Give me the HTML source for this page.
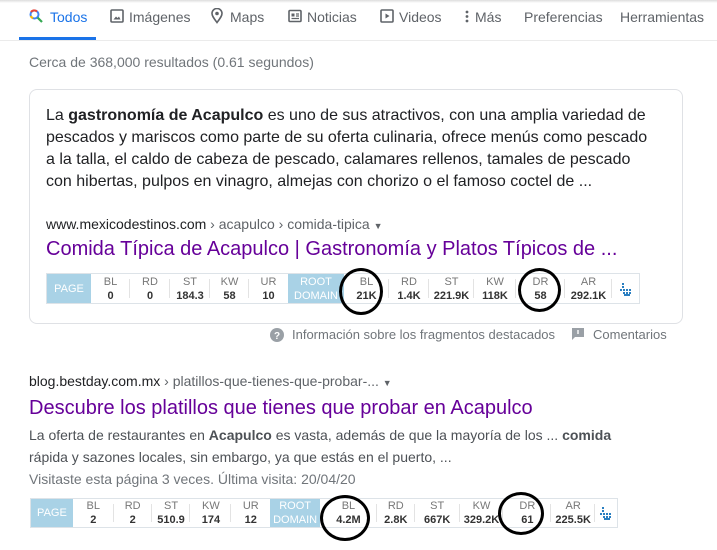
<!DOCTYPE html>
<html><head><meta charset="utf-8"><style>
*{margin:0;padding:0;box-sizing:border-box}
body{width:717px;height:550px;background:#fff;font-family:"Liberation Sans",Arial,sans-serif;position:relative;overflow:hidden}
.a{position:absolute;white-space:nowrap}
.nav{font-size:14px;color:#5f6368;top:9px}
.bar{position:absolute;height:31px;border:1px solid #dde3e8;background:#fff;display:flex;font-size:11px}
.bar div{height:100%;display:flex;flex-direction:column;align-items:center;justify-content:center;line-height:14px;position:relative}
.bar .l{color:#777}
.bar .v{color:#333;font-weight:bold}
.bar .c:after{content:"";position:absolute;right:0;top:5px;bottom:5px;border-right:1px solid #e3e3e3}
.bar .bl{background:#a9d2e6;color:#fff}
.circ{position:absolute;border:3px solid #000;border-radius:50%}
.snip{font-size:16px;color:#202124;line-height:22px}
</style></head><body>
<div style="position:absolute;top:0;left:0;width:717px;height:3px;background:linear-gradient(#ddd,#fff)"></div>
<svg class="a" style="left:29px;top:9px" width="14" height="14" viewBox="0 0 14 14"><circle cx="5.5" cy="5.5" r="4" fill="none" stroke="#4285f4" stroke-width="2"/><path d="M2 3 A4 4 0 0 1 8 2.5" stroke="#ea4335" stroke-width="2" fill="none"/><path d="M1.8 7 A4 4 0 0 0 4 9.3" stroke="#fbbc05" stroke-width="2" fill="none"/><path d="M8.5 8.5 L13 13" stroke="#34a853" stroke-width="2.2"/></svg>
<div class="a nav" style="left:50px;color:#1a73e8">Todos</div>
<div class="a" style="left:19px;top:37px;width:77px;height:3px;background:#1a73e8"></div>
<svg class="a" style="left:110px;top:9px" width="14" height="14"><rect x="1" y="1" width="12" height="12" rx="1" fill="none" stroke="#5f6368" stroke-width="1.6"/><path d="M3.5 10.5 L6 7.5 L7.5 9 L9 7.5 L10.5 10.5Z" fill="#5f6368"/></svg>
<div class="a nav" style="left:129px">Imágenes</div>
<svg class="a" style="left:211px;top:8px" width="12" height="16"><path d="M6 14.5 C3 10.5 1 8 1 5.5 A5 5 0 0 1 11 5.5 C11 8 9 10.5 6 14.5Z" fill="none" stroke="#5f6368" stroke-width="1.6"/><circle cx="6" cy="5.5" r="1.8" fill="#5f6368"/></svg>
<div class="a nav" style="left:230px">Maps</div>
<svg class="a" style="left:288px;top:9px" width="14" height="14"><rect x="1" y="1.5" width="12" height="11" rx="1" fill="none" stroke="#5f6368" stroke-width="1.6"/><rect x="3.5" y="4.5" width="3" height="3" fill="#5f6368"/><path d="M8 5h3M8 7h3M3.5 9.5h7.5" stroke="#5f6368" stroke-width="1.2"/></svg>
<div class="a nav" style="left:307px">Noticias</div>
<svg class="a" style="left:380px;top:9px" width="14" height="14"><rect x="1" y="1" width="12" height="12" rx="1" fill="none" stroke="#5f6368" stroke-width="1.6"/><path d="M5.5 4.5 L9.5 7 L5.5 9.5Z" fill="#5f6368"/></svg>
<div class="a nav" style="left:399px">Videos</div>
<svg class="a" style="left:465px;top:10px" width="4" height="13"><circle cx="2" cy="2" r="1.4" fill="#5f6368"/><circle cx="2" cy="6.5" r="1.4" fill="#5f6368"/><circle cx="2" cy="11" r="1.4" fill="#5f6368"/></svg>
<div class="a nav" style="left:475px">Más</div>
<div class="a nav" style="left:524px">Preferencias</div>
<div class="a nav" style="left:620px">Herramientas</div>
<div class="a" style="left:0;top:40px;width:717px;height:1px;background:#ebebeb"></div>
<div class="a" style="left:29px;top:54px;font-size:14px;color:#70757a">Cerca de 368,000 resultados (0.61 segundos)</div>

<div class="a" style="left:29px;top:89px;width:654px;height:235px;border:1px solid #dfe1e5;border-radius:8px"></div>
<div class="a snip" style="left:46px;top:105px">La <b>gastronomía de Acapulco</b> es uno de sus atractivos, con una amplia variedad de</div>
<div class="a snip" style="left:46px;top:127px">pescados y mariscos como parte de su oferta culinaria, ofrece menús como pescado</div>
<div class="a snip" style="left:46px;top:149px">a la talla, el caldo de cabeza de pescado, calamares rellenos, tamales de pescado</div>
<div class="a snip" style="left:46px;top:171px">con hibertas, pulpos en vinagro, almejas con chorizo o el famoso coctel de ...</div>
<div class="a" style="left:46px;top:216px;font-size:14px;color:#202124">www.mexicodestinos.com<span style="color:#5f6368"> › acapulco › comida-tipica <span style="font-size:9px">▼</span></span></div>
<div class="a" style="left:46px;top:238px;font-size:20px;color:#660099">Comida Típica de Acapulco | Gastronomía y Platos Típicos de ...</div>

<div class="bar" style="left:46px;top:273px;width:594px">
<div class="bl" style="width:44px">PAGE</div>
<div class="c" style="width:39px"><span class="l">BL</span><span class="v">0</span></div>
<div class="c" style="width:40px"><span class="l">RD</span><span class="v">0</span></div>
<div class="c" style="width:40px"><span class="l">ST</span><span class="v">184.3</span></div>
<div class="c" style="width:39px"><span class="l">KW</span><span class="v">58</span></div>
<div style="width:39px"><span class="l">UR</span><span class="v">10</span></div>
<div class="bl" style="width:56px"><span>ROOT</span><span>DOMAIN</span></div>
<div class="c" style="width:45px"><span class="l">BL</span><span class="v">21K</span></div>
<div class="c" style="width:40px"><span class="l">RD</span><span class="v">1.4K</span></div>
<div class="c" style="width:45px"><span class="l">ST</span><span class="v">221.9K</span></div>
<div class="c" style="width:42px"><span class="l">KW</span><span class="v">118K</span></div>
<div class="c" style="width:49px"><span class="l">DR</span><span class="v">58</span></div>
<div class="c" style="width:47px"><span class="l">AR</span><span class="v">292.1K</span></div>
<div style="width:27px"><svg width="12" height="14"><g fill="#2a7fc1"><rect x="2" y="1" width="2" height="2"/><rect x="2" y="4" width="2" height="2"/><rect x="0" y="7" width="2" height="2"/><rect x="3" y="7" width="2" height="2"/><rect x="6" y="7" width="2" height="2"/><rect x="9" y="7" width="2" height="2"/><rect x="3" y="10" width="2" height="2"/><rect x="6" y="10" width="2" height="2"/><rect x="9" y="10" width="2" height="2"/><rect x="4" y="12" width="6" height="2"/></g></svg></div>
</div>
<div class="circ" style="left:339px;top:268px;width:44px;height:47px"></div>
<div class="circ" style="left:518px;top:268px;width:43px;height:44px"></div>

<svg class="a" style="left:270px;top:328px" width="14" height="14"><circle cx="7" cy="7" r="7" fill="#9aa0a6"/><text x="7" y="11" font-size="10" font-weight="bold" fill="#fff" text-anchor="middle" font-family="Liberation Sans">?</text></svg>
<div class="a" style="left:292px;top:327px;font-size:13px;color:#70757a">Información sobre los fragmentos destacados</div>
<svg class="a" style="left:572px;top:328px" width="12" height="13"><path d="M0 0h12v9H3l-3 3z" fill="#9aa0a6"/><rect x="5.3" y="2" width="1.4" height="4" fill="#fff"/></svg>
<div class="a" style="left:593px;top:327px;font-size:13px;color:#70757a">Comentarios</div>

<div class="a" style="left:29px;top:373px;font-size:14px;color:#202124">blog.bestday.com.mx<span style="color:#5f6368"> › platillos-que-tienes-que-probar-... <span style="font-size:9px">▼</span></span></div>
<div class="a" style="left:29px;top:397px;font-size:20px;color:#660099">Descubre los platillos que tienes que probar en Acapulco</div>
<div class="a" style="left:29px;top:427px;font-size:14px;color:#4d5156">La oferta de restaurantes en <b>Acapulco</b> es vasta, además de que la mayoría de los ... <b>comida</b></div>
<div class="a" style="left:29px;top:449px;font-size:14px;color:#4d5156">rápida y sazones locales, sin embargo, ya que estás en el puerto, ...</div>
<div class="a" style="left:29px;top:471px;font-size:14px;color:#70757a">Visitaste esta página 3 veces. Última visita: 20/04/20</div>

<div class="bar" style="left:30px;top:498px;width:588px;height:30px">
<div class="bl" style="width:42px">PAGE</div>
<div class="c" style="width:41px"><span class="l">BL</span><span class="v">2</span></div>
<div class="c" style="width:38px"><span class="l">RD</span><span class="v">2</span></div>
<div class="c" style="width:39px"><span class="l">ST</span><span class="v">510.9</span></div>
<div class="c" style="width:41px"><span class="l">KW</span><span class="v">174</span></div>
<div style="width:39px"><span class="l">UR</span><span class="v">12</span></div>
<div class="bl" style="width:50px"><span>ROOT</span><span>DOMAIN</span></div>
<div class="c" style="width:57px"><span class="l">BL</span><span class="v">4.2M</span></div>
<div class="c" style="width:38px"><span class="l">RD</span><span class="v">2.8K</span></div>
<div class="c" style="width:45px"><span class="l">ST</span><span class="v">667K</span></div>
<div class="c" style="width:44px"><span class="l">KW</span><span class="v">329.2K</span></div>
<div class="c" style="width:48px"><span class="l">DR</span><span class="v">61</span></div>
<div class="c" style="width:44px"><span class="l">AR</span><span class="v">225.5K</span></div>
<div style="width:22px"><svg width="12" height="14"><g fill="#2a7fc1"><rect x="2" y="1" width="2" height="2"/><rect x="2" y="4" width="2" height="2"/><rect x="0" y="7" width="2" height="2"/><rect x="3" y="7" width="2" height="2"/><rect x="6" y="7" width="2" height="2"/><rect x="9" y="7" width="2" height="2"/><rect x="3" y="10" width="2" height="2"/><rect x="6" y="10" width="2" height="2"/><rect x="9" y="10" width="2" height="2"/><rect x="4" y="12" width="6" height="2"/></g></svg></div>
</div>
<div class="circ" style="left:320px;top:495px;width:50px;height:46px"></div>
<div class="circ" style="left:498px;top:492px;width:46px;height:43px"></div>
</body></html>
